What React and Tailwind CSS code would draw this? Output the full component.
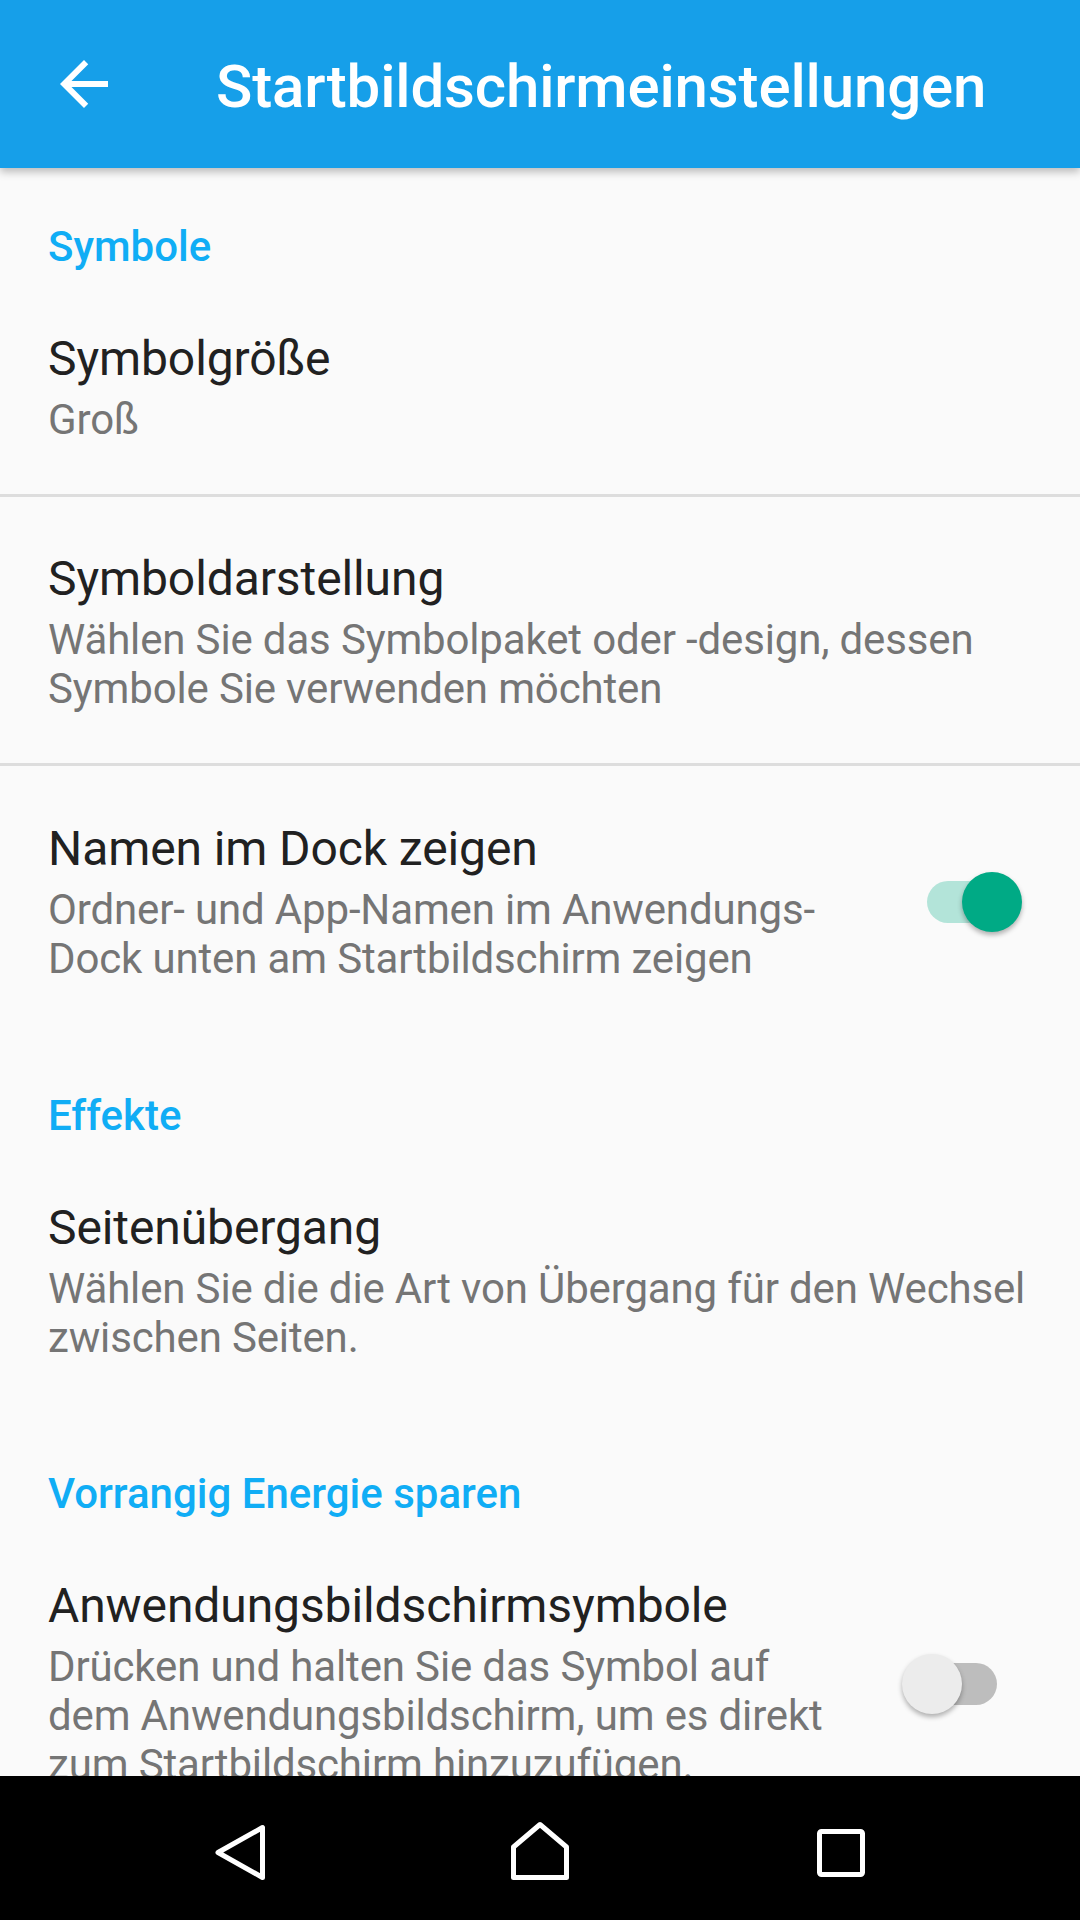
import React from 'react';

const Category = ({ label, top = 'pt-[55px]' }) => (
    <div className={`${top} pb-[4px] pl-[48px] text-[42px] leading-[49px] font-medium text-[#10adf5]`}>
        {label}
    </div>
);

const Toggle = ({ on }) => (
    <div className={`relative shrink-0 ml-[67px] w-[70px] h-[42px] rounded-full ${on ? 'bg-[#b3e4d9]' : 'bg-[#bdbdbd]'}`}>
        <div
            className={`absolute top-[-9px] w-[60px] h-[60px] rounded-full shadow-[0_3px_5px_rgba(0,0,0,0.3)] ${on ? 'left-[35px] bg-[#00aa85]' : 'left-[-25px] bg-[#ececec]'}`}
        />
    </div>
);

const Pref = ({ title, lines, toggle, pad = 'pt-[56px] pb-[50px]' }) => (
    <div className={`flex items-center pl-[48px] ${pad} ${toggle === undefined ? 'pr-[48px]' : 'pr-[83px]'}`}>
        <div className="flex-1 min-w-0">
            <div className="text-[48px] leading-[56px] text-[#212121] whitespace-nowrap tracking-[-0.1px]">{title}</div>
            <div className="mt-[8px] text-[42px] leading-[49px] text-[#757575] tracking-[-0.15px]">
                {lines.map((line, i) => (
                    <div key={i} className="whitespace-nowrap">{line}</div>
                ))}
            </div>
        </div>
        {toggle !== undefined && <Toggle on={toggle} />}
    </div>
);

const Divider = () => <div className="h-[3px] bg-[#dddddd]" />;

const App = () => {
    return (
        <div className="h-[1920px] w-[1080px] flex flex-col bg-[#fafafa] font-['Roboto',sans-serif] overflow-hidden">
            {/* App bar */}
            <div className="relative z-10 h-[168px] shrink-0 flex items-center bg-[#169fe9] shadow-[0_4px_8px_rgba(0,0,0,0.25)]">
                <svg className="ml-[48px] w-[72px] h-[72px]" viewBox="0 0 24 24" fill="#ffffff">
                    <path d="M20 11H7.83l5.59-5.59L12 4l-8 8 8 8 1.41-1.41L7.83 13H20v-2z" />
                </svg>
                <div className="ml-[96px] pt-[5px] text-[60px] leading-[70px] font-medium text-white whitespace-nowrap tracking-[-0.15px]">
                    Startbildschirmeinstellungen
                </div>
            </div>

            {/* Settings list */}
            <div className="flex-1 min-h-0 overflow-hidden">
                <Category label="Symbole" top="pt-[54px]" />
                <Pref title="Symbolgröße" lines={['Groß']} pad="pt-[56px] pb-[50px]" />
                <Divider />
                <Pref
                    title="Symboldarstellung"
                    lines={['Wählen Sie das Symbolpaket oder -design, dessen', 'Symbole Sie verwenden möchten']}
                    pad="pt-[54px] pb-[50px]"
                />
                <Divider />
                <Pref
                    title="Namen im Dock zeigen"
                    lines={['Ordner- und App-Namen im Anwendungs-', 'Dock unten am Startbildschirm zeigen']}
                    toggle={true}
                    pad="pt-[55px] pb-[50px]"
                />

                <Category label="Effekte" top="pt-[58px]" />
                <Pref
                    title="Seitenübergang"
                    lines={['Wählen Sie die die Art von Übergang für den Wechsel', 'zwischen Seiten.']}
                />

                <Category label="Vorrangig Energie sparen" top="pt-[57px]" />
                <Pref
                    title="Anwendungsbildschirmsymbole"
                    lines={[
                        'Drücken und halten Sie das Symbol auf',
                        'dem Anwendungsbildschirm, um es direkt',
                        'zum Startbildschirm hinzuzufügen.',
                    ]}
                    toggle={false}
                />
            </div>

            {/* Navigation bar */}
            <div className="h-[144px] shrink-0 bg-black flex items-center justify-center">
                <div className="w-[300px] flex justify-center">
                    <svg className="w-[72px] h-[72px]" viewBox="0 0 72 72" fill="none" stroke="#ffffff" strokeWidth="5" strokeLinejoin="round">
                        <path d="M14 40.5 L58.5 15.5 L58.5 65.5 Z" />
                    </svg>
                </div>
                <div className="w-[300px] flex justify-center">
                    <svg className="w-[72px] h-[72px]" viewBox="0 0 72 72" fill="none" stroke="#ffffff" strokeWidth="5" strokeLinejoin="round">
                        <path d="M36 12.5 L62.5 35 L62.5 65.5 L9.5 65.5 L9.5 35 Z" />
                    </svg>
                </div>
                <div className="w-[300px] flex justify-center">
                    <svg className="w-[72px] h-[72px]" viewBox="0 0 72 72" fill="none" stroke="#ffffff" strokeWidth="5" strokeLinejoin="round">
                        <rect x="15.5" y="19.5" width="43" height="43" rx="2" />
                    </svg>
                </div>
            </div>
        </div>
    );
};

export default App;
